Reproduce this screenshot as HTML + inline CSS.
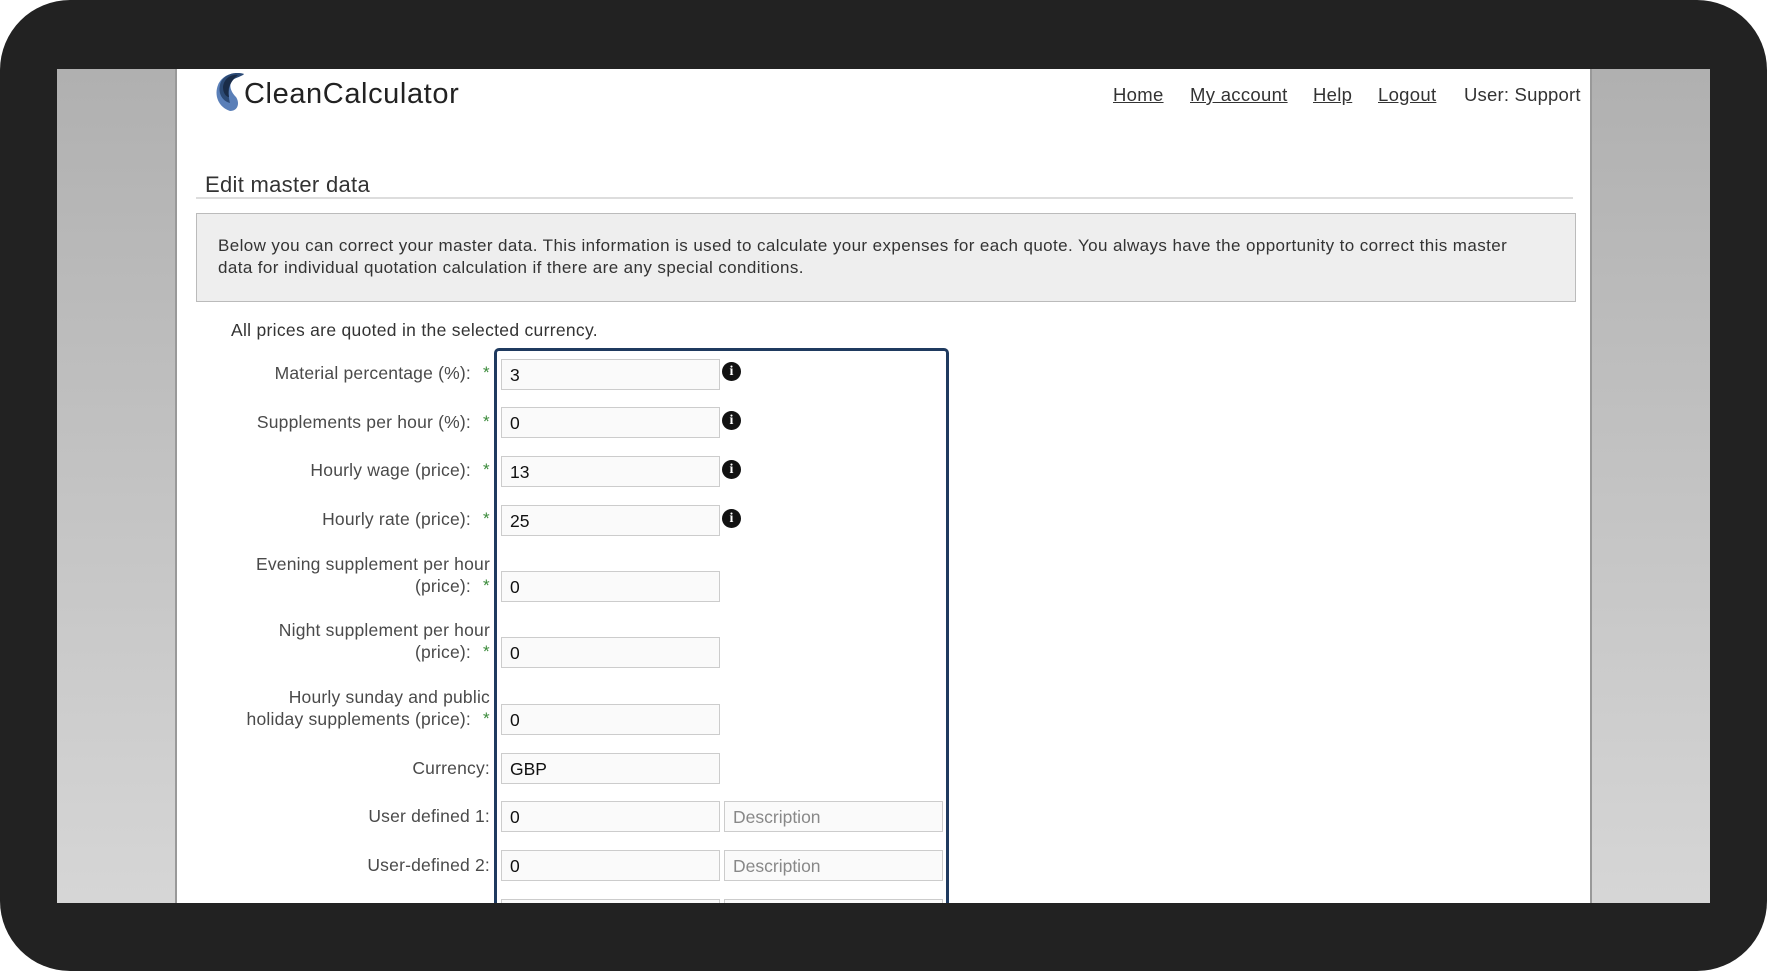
<!DOCTYPE html>
<html><head><meta charset="utf-8"><style>
*{margin:0;padding:0;box-sizing:border-box}
body{width:1767px;height:971px;background:#fff;overflow:hidden;position:relative;font-family:"Liberation Sans",sans-serif;color:#444}
#frame{position:absolute;left:0;top:0;width:1767px;height:971px;background:#222;border-radius:70px}
#screen{position:absolute;left:57px;top:69px;width:1653px;height:834px;background:linear-gradient(#b0b0b0,#d6d6d6);overflow:hidden}
#page{position:absolute;left:118px;top:0;width:1417px;height:834px;background:#fff;border-left:2px solid #999;border-right:2px solid #999}
.a{position:absolute;white-space:nowrap}
.nav{font-size:18.5px;color:#333;text-decoration:underline;top:15px;letter-spacing:0.3px}
.lbl{font-size:17.5px;color:#4a4a4a;text-align:right;letter-spacing:0.2px}
.star{color:#3a8a3a;font-size:17px}
.in{position:absolute;width:219px;height:31px;background:#fafafa;border:1px solid #ccc;font-size:17.5px;color:#111;padding:5px 8px}
.ds{color:#888;width:219px}
.info{position:absolute;width:19px;height:19px;border-radius:50%;background:#111;color:#fff;font:bold 14px "Liberation Serif",serif;text-align:center;line-height:19px}
</style></head><body>
<div id="frame"></div>
<div id="screen">
<div id="page">
<svg class="a" style="left:31px;top:2px" width="40" height="42" viewBox="0 0 40 42">
<path d="M36 3C26 0 14 4 10 14C6 24 10 36 22 40C30 40 32 32 28 26C22 20 20 12 26 8C30 6 34 5 36 3Z" fill="#5a7fb8"/>
<path d="M36 3C26 0 14 4 12 14C10 22 14 30 22 32C20 24 20 14 26 8C30 6 34 5 36 3Z" fill="#2c4a75"/>
<path d="M30 4C22 3 16 8 15 16C15 22 18 26 21 26C19 18 22 10 30 4Z" fill="#1a2c48"/>
</svg>
<div class="a" style="left:67px;top:9px;font-size:29px;color:#222;letter-spacing:0.6px">CleanCalculator</div>
<div class="a nav" style="left:936px">Home</div>
<div class="a nav" style="left:1013px">My account</div>
<div class="a nav" style="left:1136px">Help</div>
<div class="a nav" style="left:1201px">Logout</div>
<div class="a" style="left:1287px;top:15px;font-size:18.5px;color:#333;letter-spacing:0.2px">User: Support</div>
<div class="a" style="left:28px;top:103px;font-size:22px;color:#333;letter-spacing:0.3px">Edit master data</div>
<div class="a" style="left:19px;top:128px;width:1377px;height:2px;background:#ddd"></div>
<div class="a" style="left:19px;top:144px;width:1380px;height:89px;background:#eee;border:1px solid #bbb"></div>
<div class="a" style="left:41px;top:166px;font-size:17px;line-height:22px;color:#333;white-space:normal;width:1315px;letter-spacing:0.4px">Below you can correct your master data. This information is used to calculate your expenses for each quote. You always have the opportunity to correct this master data for individual quotation calculation if there are any special conditions.</div>
<div class="a" style="left:54px;top:251px;font-size:17.5px;color:#333;letter-spacing:0.3px">All prices are quoted in the selected currency.</div>
<div class="a" style="left:317px;top:279px;width:455px;height:600px;border:3px solid #1f3a5f;border-radius:5px"></div>

<div class="a lbl" style="right:1119px;top:294px">Material percentage (%):</div><div class="a star" style="left:306px;top:294px">*</div>
<div class="in" style="left:324px;top:290px">3</div><div class="info" style="left:545px;top:293px">i</div>
<div class="a lbl" style="right:1119px;top:343px">Supplements per hour (%):</div><div class="a star" style="left:306px;top:343px">*</div>
<div class="in" style="left:324px;top:338px">0</div><div class="info" style="left:545px;top:342px">i</div>
<div class="a lbl" style="right:1119px;top:391px">Hourly wage (price):</div><div class="a star" style="left:306px;top:391px">*</div>
<div class="in" style="left:324px;top:387px">13</div><div class="info" style="left:545px;top:391px">i</div>
<div class="a lbl" style="right:1119px;top:440px">Hourly rate (price):</div><div class="a star" style="left:306px;top:440px">*</div>
<div class="in" style="left:324px;top:436px">25</div><div class="info" style="left:545px;top:440px">i</div>

<div class="a lbl" style="right:1100px;top:485px">Evening supplement per hour</div>
<div class="a lbl" style="right:1119px;top:507px">(price):</div><div class="a star" style="left:306px;top:507px">*</div>
<div class="in" style="left:324px;top:502px">0</div>
<div class="a lbl" style="right:1100px;top:551px">Night supplement per hour</div>
<div class="a lbl" style="right:1119px;top:573px">(price):</div><div class="a star" style="left:306px;top:573px">*</div>
<div class="in" style="left:324px;top:568px">0</div>
<div class="a lbl" style="right:1100px;top:618px">Hourly sunday and public</div>
<div class="a lbl" style="right:1119px;top:640px">holiday supplements (price):</div><div class="a star" style="left:306px;top:640px">*</div>
<div class="in" style="left:324px;top:635px">0</div>
<div class="a lbl" style="right:1100px;top:689px">Currency:</div>
<div class="in" style="left:324px;top:684px">GBP</div>
<div class="a lbl" style="right:1100px;top:737px">User defined 1:</div>
<div class="in" style="left:324px;top:732px">0</div><div class="in ds" style="left:547px;top:732px">Description</div>
<div class="a lbl" style="right:1100px;top:786px">User-defined 2:</div>
<div class="in" style="left:324px;top:781px">0</div><div class="in ds" style="left:547px;top:781px">Description</div>
<div class="in" style="left:324px;top:830px"></div><div class="in ds" style="left:547px;top:830px"></div>
</div>
</div>
</body></html>
